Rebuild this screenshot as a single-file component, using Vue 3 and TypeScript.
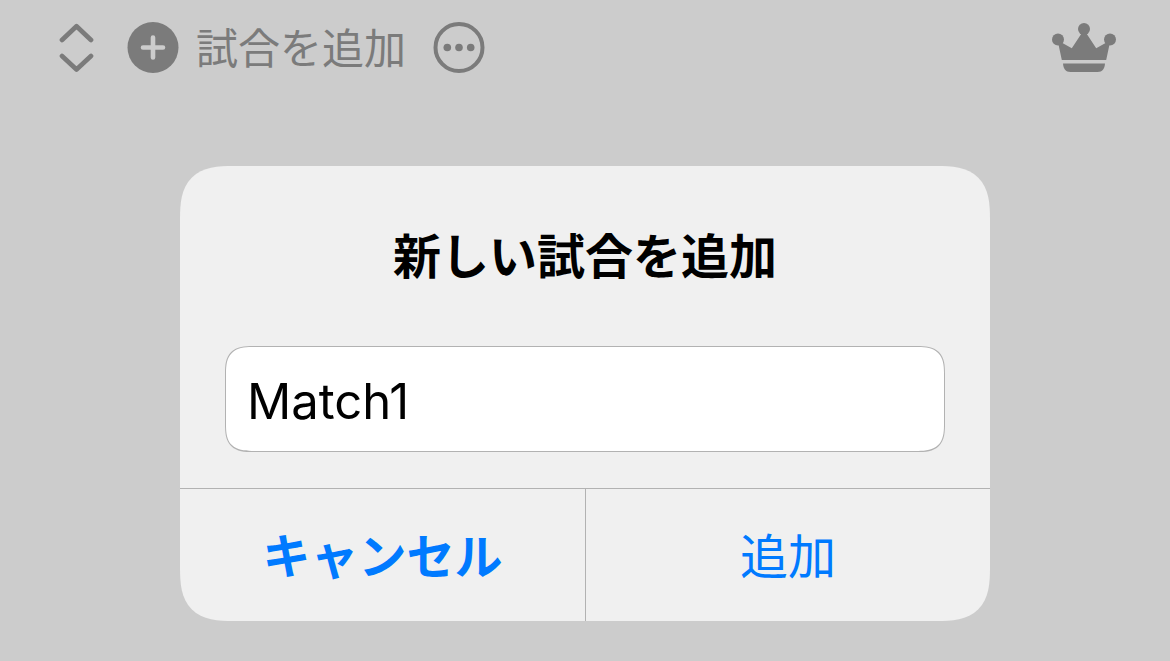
<script setup lang="ts">
import { ref } from 'vue'

const matchName = ref<string>('Match1')
</script>

<template>
  <div class="screen">
    <header class="toolbar">
      <div class="tools">
        <button class="tool sort" type="button" aria-label="並べ替え">
          <svg width="36" height="52" viewBox="0 0 36 52" fill="none" stroke="currentColor" stroke-width="4.7" stroke-linecap="round" stroke-linejoin="round">
            <path d="M3 18 17.5 4.2 32 18M3 34 17.5 47.5 32 34" />
          </svg>
        </button>
        <button class="tool add" type="button">
          <svg width="52" height="52" viewBox="0 0 52 52">
            <circle cx="26" cy="25.5" r="25.5" fill="currentColor" />
            <path d="M26 15.5v20M16 25.5h20" fill="none" stroke="#cccccc" stroke-width="4.6" stroke-linecap="round" />
          </svg>
          <span>試合を追加</span>
        </button>
        <button class="tool more" type="button" aria-label="その他">
          <svg width="52" height="52" viewBox="0 0 52 52" fill="currentColor">
            <circle cx="26" cy="25.5" r="23.5" fill="none" stroke="currentColor" stroke-width="4" />
            <circle cx="14.3" cy="25.5" r="3.8" />
            <circle cx="26" cy="25.5" r="3.8" />
            <circle cx="37.7" cy="25.5" r="3.8" />
          </svg>
        </button>
      </div>
      <button class="tool" type="button" aria-label="プレミアム">
        <svg width="64" height="50" viewBox="0 0 64 50" fill="currentColor">
          <circle cx="6" cy="16.5" r="6" />
          <circle cx="32" cy="6" r="6" />
          <circle cx="58" cy="16.5" r="6" />
          <path d="M6.5 21.5 9.5 19.5 19.8 25.3 29.5 10.5H34.5L44.2 25.3 54.5 19.5 57.5 21.5 54.2 37H9.8Z" />
          <path d="M11 40.5H53C52.5 46 50.5 49 45.5 49H18.5C13.5 49 11.5 46 11 40.5Z" />
        </svg>
      </button>
    </header>

    <main class="stage">
      <form class="dialog" role="dialog" aria-labelledby="dialog-title" @submit.prevent>
        <div class="body">
          <h1 id="dialog-title"><label for="match-name">新しい試合を追加</label></h1>
          <input id="match-name" v-model="matchName" type="text" autocomplete="off" spellcheck="false" />
        </div>
        <div class="actions">
          <button class="action cancel" type="button">キャンセル</button>
          <button class="action" type="submit">追加</button>
        </div>
      </form>
    </main>
  </div>
</template>

<style>
body {
  margin: 0;
  background: #cccccc;
}
</style>

<style scoped>
.screen {
  box-sizing: border-box;
  min-height: 100vh;
  background: #cccccc;
  font-family: Inter, "Noto Sans CJK JP", sans-serif;
}

button {
  margin: 0;
  padding: 0;
  border: 0;
  background: none;
  font: inherit;
}

svg {
  display: block;
  flex: none;
}

.toolbar {
  display: flex;
  align-items: center;
  justify-content: space-between;
  height: 96px;
  padding: 0 54px 0 59px;
}

.tools {
  display: flex;
  align-items: center;
}

.tool {
  display: flex;
  align-items: center;
  color: #7b7b7b;
}

.add {
  gap: 17px;
  margin: 0 27px 0 32px;
  font-family: "Noto Sans CJK JP", sans-serif;
  font-size: 42px;
  line-height: 48px;
}

.add span {
  padding-bottom: 4px;
}

.stage {
  display: flex;
  justify-content: center;
  padding: 70px 24px 40px;
}

.dialog {
  width: 100%;
  max-width: 810px;
  border-radius: 40px;
  background: #f0f0f0;
  overflow: hidden;
}

.body {
  padding: 51px 45px 36px;
}

h1 {
  margin: 0 0 57px;
  color: #000000;
  font-family: "Noto Sans CJK JP", sans-serif;
  font-size: 48px;
  font-weight: 700;
  line-height: 72px;
  text-align: center;
}

input {
  display: block;
  box-sizing: border-box;
  width: 100%;
  height: 106px;
  padding: 4px 21px 0;
  border: 1px solid #b2b2b2;
  border-radius: 20px;
  outline: 0;
  background: #ffffff;
  color: #000000;
  font-family: Inter, "Noto Sans CJK JP", sans-serif;
  font-size: 49px;
}

.actions {
  display: grid;
  grid-template-columns: 1fr 1fr;
  border-top: 1px solid #b2b2b2;
}

.action {
  height: 132px;
  padding-bottom: 4px;
  color: #007aff;
  font-family: "Noto Sans CJK JP", sans-serif;
  font-size: 48px;
  line-height: 72px;
}

.action + .action {
  border-left: 1px solid #b2b2b2;
}

.cancel {
  font-weight: 700;
}

@supports (corner-shape: superellipse(1.5)) {
  .dialog {
    border-radius: 54px;
    corner-shape: superellipse(1.5);
  }

  input {
    border-radius: 28px;
    corner-shape: superellipse(1.5);
  }
}
</style>
